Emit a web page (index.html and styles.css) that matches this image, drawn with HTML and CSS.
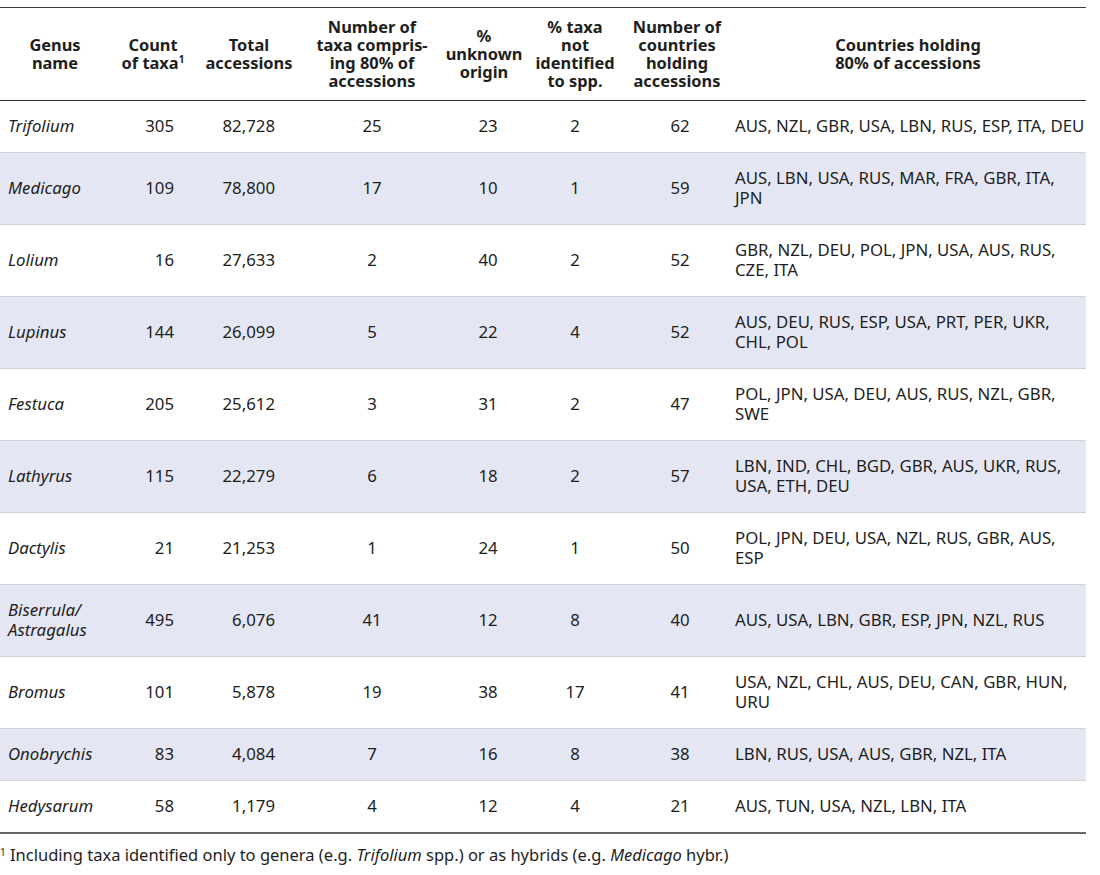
FILE: index.html
```html
<!DOCTYPE html>
<html lang="en">
<head>
<meta charset="utf-8">
<title>Genus accessions</title>
<link rel="stylesheet" href="styles.css">
</head>
<body>
<table class="data">
  <colgroup>
    <col class="c-genus">
    <col class="c-count">
    <col class="c-total">
    <col class="c-taxa80">
    <col class="c-unknown">
    <col class="c-notid">
    <col class="c-ncountries">
    <col class="c-countries">
  </colgroup>
  <thead>
    <tr>
      <th>Genus<br>name</th>
      <th>Count<br>of taxa<sup>1</sup></th>
      <th>Total<br>accessions</th>
      <th>Number of<br>taxa compris-<br>ing 80% of<br>accessions</th>
      <th>%<br>unknown<br>origin</th>
      <th>% taxa<br>not<br>identified<br>to spp.</th>
      <th>Number of<br>countries<br>holding<br>accessions</th>
      <th>Countries holding<br>80% of accessions</th>
    </tr>
  </thead>
  <tbody>
    <tr><td class="g">Trifolium</td><td class="n1">305</td><td class="n2">82,728</td><td class="c">25</td><td class="c u">23</td><td class="c">2</td><td class="c k">62</td><td class="l">AUS, NZL, GBR, USA, LBN, RUS, ESP, ITA, DEU</td></tr>
    <tr class="s"><td class="g">Medicago</td><td class="n1">109</td><td class="n2">78,800</td><td class="c">17</td><td class="c u">10</td><td class="c">1</td><td class="c k">59</td><td class="l">AUS, LBN, USA, RUS, MAR, FRA, GBR, ITA,<br>JPN</td></tr>
    <tr><td class="g">Lolium</td><td class="n1">16</td><td class="n2">27,633</td><td class="c">2</td><td class="c u">40</td><td class="c">2</td><td class="c k">52</td><td class="l">GBR, NZL, DEU, POL, JPN, USA, AUS, RUS,<br>CZE, ITA</td></tr>
    <tr class="s"><td class="g">Lupinus</td><td class="n1">144</td><td class="n2">26,099</td><td class="c">5</td><td class="c u">22</td><td class="c">4</td><td class="c k">52</td><td class="l">AUS, DEU, RUS, ESP, USA, PRT, PER, UKR,<br>CHL, POL</td></tr>
    <tr><td class="g">Festuca</td><td class="n1">205</td><td class="n2">25,612</td><td class="c">3</td><td class="c u">31</td><td class="c">2</td><td class="c k">47</td><td class="l">POL, JPN, USA, DEU, AUS, RUS, NZL, GBR,<br>SWE</td></tr>
    <tr class="s"><td class="g">Lathyrus</td><td class="n1">115</td><td class="n2">22,279</td><td class="c">6</td><td class="c u">18</td><td class="c">2</td><td class="c k">57</td><td class="l">LBN, IND, CHL, BGD, GBR, AUS, UKR, RUS,<br>USA, ETH, DEU</td></tr>
    <tr><td class="g">Dactylis</td><td class="n1">21</td><td class="n2">21,253</td><td class="c">1</td><td class="c u">24</td><td class="c">1</td><td class="c k">50</td><td class="l">POL, JPN, DEU, USA, NZL, RUS, GBR, AUS,<br>ESP</td></tr>
    <tr class="s"><td class="g">Biserrula/<br>Astragalus</td><td class="n1">495</td><td class="n2">6,076</td><td class="c">41</td><td class="c u">12</td><td class="c">8</td><td class="c k">40</td><td class="l">AUS, USA, LBN, GBR, ESP, JPN, NZL, RUS</td></tr>
    <tr><td class="g">Bromus</td><td class="n1">101</td><td class="n2">5,878</td><td class="c">19</td><td class="c u">38</td><td class="c">17</td><td class="c k">41</td><td class="l">USA, NZL, CHL, AUS, DEU, CAN, GBR, HUN,<br>URU</td></tr>
    <tr class="s"><td class="g">Onobrychis</td><td class="n1">83</td><td class="n2">4,084</td><td class="c">7</td><td class="c u">16</td><td class="c">8</td><td class="c k">38</td><td class="l">LBN, RUS, USA, AUS, GBR, NZL, ITA</td></tr>
    <tr class="last"><td class="g">Hedysarum</td><td class="n1">58</td><td class="n2">1,179</td><td class="c">4</td><td class="c u">12</td><td class="c">4</td><td class="c k">21</td><td class="l">AUS, TUN, USA, NZL, LBN, ITA</td></tr>
  </tbody>
</table>
<p class="note"><sup>1</sup> Including taxa identified only to genera (e.g. <i>Trifolium</i> spp.) or as hybrids (e.g. <i>Medicago</i> hybr.)</p>
</body>
</html>
```

FILE: styles.css
```css
html, body {
  margin: 0;
  padding: 0;
  background: #ffffff;
}

body {
  font-family: "Noto Sans", "Open Sans", "DejaVu Sans", sans-serif;
  color: #1e1e1e;
}

.data {
  width: 1086px;
  margin-top: 7px;
  border-collapse: collapse;
  table-layout: fixed;
  border-top: 1.5px solid #3a3a3a;
  border-bottom: 2px solid #666666;
}

.c-genus { width: 110px; }
.c-count { width: 86px; }
.c-total { width: 106px; }
.c-taxa80 { width: 140px; }
.c-unknown { width: 84px; }
.c-notid { width: 98px; }
.c-ncountries { width: 106px; }
.c-countries { width: auto; }

.data th {
  font-size: 16.4px;
  font-weight: 700;
  line-height: 18px;
  text-align: center;
  vertical-align: middle;
  padding: 10px 0 10px;
  border-bottom: 1.5px solid #333333;
}

.data th sup {
  font-size: 10px;
  line-height: 0;
  vertical-align: 6px;
}

.data td {
  font-size: 16.8px;
  line-height: 20px;
  padding: 15px 0 16px;
  vertical-align: middle;
  border-bottom: 1px solid #cfd0d8;
}

.data tr.s td {
  background: #e4e7f3;
}

.data tr.last td {
  border-bottom: none;
}

.data td.g {
  font-style: italic;
  padding-left: 8px;
}

.data td.n1 {
  text-align: right;
  padding-right: 22px;
}

.data td.n2 {
  text-align: right;
  padding-right: 27px;
}

.data td.c {
  text-align: center;
}

.data td.u {
  padding-left: 8px;
}

.data td.k {
  padding-left: 6px;
}

.data td.l {
  text-align: left;
  padding-left: 5px;
  white-space: nowrap;
}

.note {
  margin: 11px 0 0;
  font-size: 16.5px;
  line-height: 20px;
}

.note sup {
  font-size: 10px;
  line-height: 0;
  vertical-align: 5px;
}
```
